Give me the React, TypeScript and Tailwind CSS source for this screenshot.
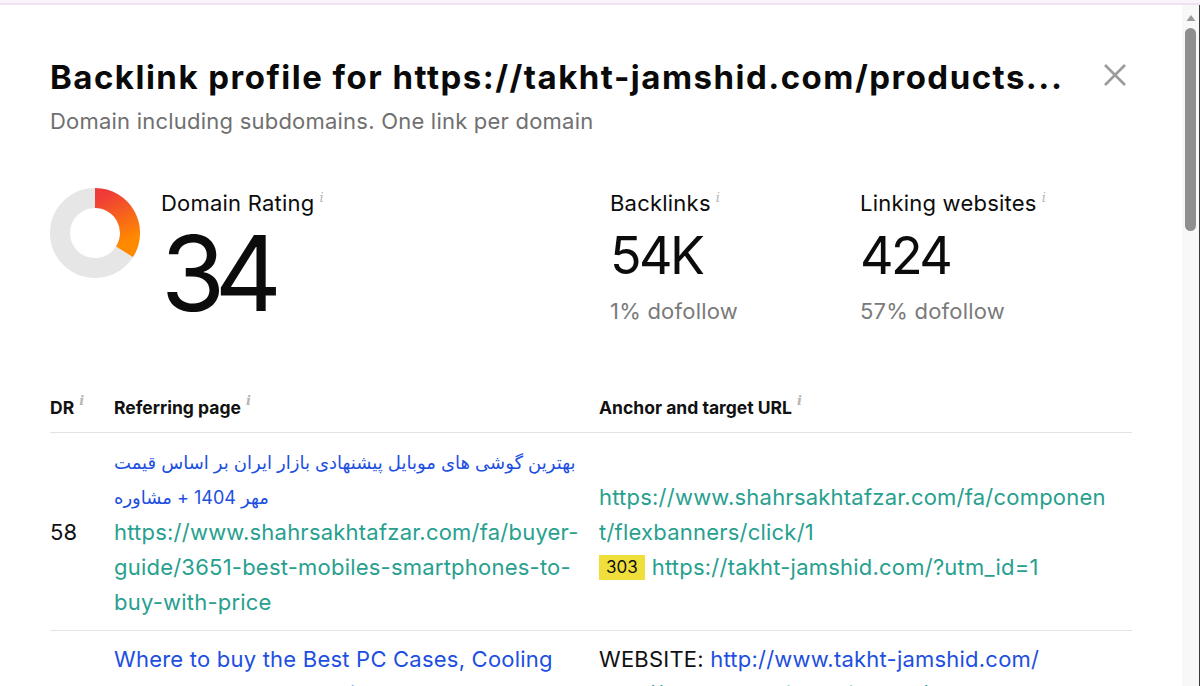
import React from "react";

const Info = () => (
  <span className="ml-[5px] relative top-[-9px] text-[13px] italic text-[#b5b5b5] font-['DejaVu_Serif',serif] leading-none">
    i
  </span>
);

const Donut = () => {
  const cx = 45, cy = 45, r = 35;
  const pct = 0.34;
  const a = pct * 2 * Math.PI;
  const ex = cx + r * Math.sin(a);
  const ey = cy - r * Math.cos(a);
  return (
    <svg width="90" height="90" viewBox="0 0 90 90">
      <defs>
        <linearGradient id="g" x1="0" y1="0" x2="0.3" y2="1">
          <stop offset="0" stopColor="#ef3a3a" />
          <stop offset="1" stopColor="#ff8a00" />
        </linearGradient>
      </defs>
      <circle cx={cx} cy={cy} r={r} fill="none" stroke="#e6e6e6" strokeWidth="20" />
      <path d={`M ${cx} ${cy - r} A ${r} ${r} 0 0 1 ${ex} ${ey}`} fill="none" stroke="url(#g)" strokeWidth="20" />
    </svg>
  );
};

export default function App() {
  return (
    <div className="w-[1200px] h-[686px] overflow-hidden bg-white flex flex-col font-['Inter',sans-serif] text-[#111]">
      <div className="h-[3px] bg-[#faf3fa] shrink-0" />
      <div className="h-[2px] bg-[#ede2ee] shrink-0" />
      <div className="flex flex-1 min-h-0">
        <div className="flex-1 min-w-0 pl-[50px] pt-[52px]">
          {/* Header */}
          <div className="flex items-start w-[1078px]">
            <div className="flex-1 min-w-0">
              <h1 className="text-[33px] leading-[40px] font-bold tracking-[0.045em] whitespace-nowrap text-[#0a0a0a]">
                Backlink profile for https://takht-jamshid.com/products...
              </h1>
              <p className="mt-[9px] text-[22px] leading-[30px] tracking-[0.01em] text-[#707070]">
                Domain including subdomains. One link per domain
              </p>
            </div>
            <button className="mt-[5px] w-[26px] h-[26px] flex items-center justify-center">
              <svg width="24" height="24" viewBox="0 0 24 24">
                <path d="M2 2 L22 22 M22 2 L2 22" stroke="#9b9b9b" strokeWidth="2.6" />
              </svg>
            </button>
          </div>

          {/* Stats */}
          <div className="flex mt-[52px] text-[#0c0c0c]">
            <div className="w-[560px] flex">
              <div className="shrink-0">
                <Donut />
              </div>
              <div className="ml-[21px] flex flex-col">
                <div className="text-[22px] leading-[30px] tracking-[0.01em]">
                  Domain Rating<Info />
                </div>
                <div className="text-[104px] leading-[80px] tracking-[-0.1em] mt-[15px]">34</div>
              </div>
            </div>
            <div className="w-[250px] flex flex-col">
              <div className="text-[22px] leading-[30px] tracking-[0.01em]">
                Backlinks<Info />
              </div>
              <div className="text-[52px] leading-[60px] tracking-[-0.05em] mt-[8px]">54K</div>
              <div className="text-[22px] leading-[30px] tracking-[0.01em] text-[#7a7a7a] mt-[10px]">1% dofollow</div>
            </div>
            <div className="w-[250px] flex flex-col">
              <div className="text-[22px] leading-[30px] tracking-[0.01em]">
                Linking websites<Info />
              </div>
              <div className="text-[52px] leading-[60px] tracking-[-0.05em] mt-[8px]">424</div>
              <div className="text-[22px] leading-[30px] tracking-[0.01em] text-[#7a7a7a] mt-[10px]">57% dofollow</div>
            </div>
          </div>

          {/* Table */}
          <div className="mt-[59px] w-[1082px]">
            <div className="flex items-center h-[48px] border-b border-[#e3e3e3] text-[17.5px] font-bold">
              <div className="w-[64px] shrink-0">DR<Info /></div>
              <div className="w-[485px] shrink-0">Referring page<Info /></div>
              <div className="flex-1">Anchor and target URL<Info /></div>
            </div>

            <div className="flex items-center border-b border-[#e3e3e3] pt-[12px] pb-[10px] text-[22px] leading-[35px] tracking-[0.01em]">
              <div className="w-[64px] shrink-0">58</div>
              <div className="w-[485px] shrink-0">
                <div className="text-[#1d4fe0] text-[18px] whitespace-nowrap tracking-normal font-['Inter','DejaVu_Sans',sans-serif]">
                  <div>بهترین گوشی های موبایل پیشنهادی بازار ایران بر اساس قیمت</div>
                  <div>مهر 1404 + مشاوره</div>
                </div>
                <div className="w-[475px] text-[#27a08f]">
                  https://www.shahrsakhtafzar.com/fa/buyer-guide/3651-best-mobiles-smartphones-to-buy-with-price
                </div>
              </div>
              <div className="flex-1">
                <div className="w-[512px] break-all text-[#27a08f]">
                  https://www.shahrsakhtafzar.com/fa/component/flexbanners/click/1
                </div>
                <div className="flex items-center">
                  <span className="bg-[#f0df3a] text-[17px] leading-[25px] px-[7px] text-[#111] mr-[7px] tracking-normal">303</span>
                  <span className="text-[#27a08f]">https://takht-jamshid.com/?utm_id=1</span>
                </div>
              </div>
            </div>

            <div className="flex items-center pt-[11px] pb-[10px] text-[22px] leading-[35px] tracking-[0.01em]">
              <div className="w-[64px] shrink-0">98</div>
              <div className="w-[485px] shrink-0 text-[#1d4fe0]">
                Where to buy the Best PC Cases, Cooling
                <br />
                Fans and Power Supplies
                <br />
                https://www.takht-jamshid.com/
              </div>
              <div className="flex-1 self-start">
                <div>
                  WEBSITE: <span className="text-[#1d4fe0]">http://www.takht-jamshid.com/</span>
                </div>
                <div className="text-[#27a08f]">http://www.takht-jamshid.com/</div>
              </div>
            </div>
          </div>
        </div>

        {/* Scrollbar */}
        <div className="w-[18px] shrink-0 bg-[#f8f8f8] flex flex-col items-center border-r border-[#3a3a3a]">
          <svg width="12" height="10" viewBox="0 0 12 10" className="mt-[8px]">
            <path d="M6 2 L10.5 8 L1.5 8 Z" fill="#9a9a9a" />
          </svg>
          <div className="mt-[5px] w-[11px] h-[203px] rounded-full bg-[#8f8f8f]" />
        </div>
      </div>
    </div>
  );
}
